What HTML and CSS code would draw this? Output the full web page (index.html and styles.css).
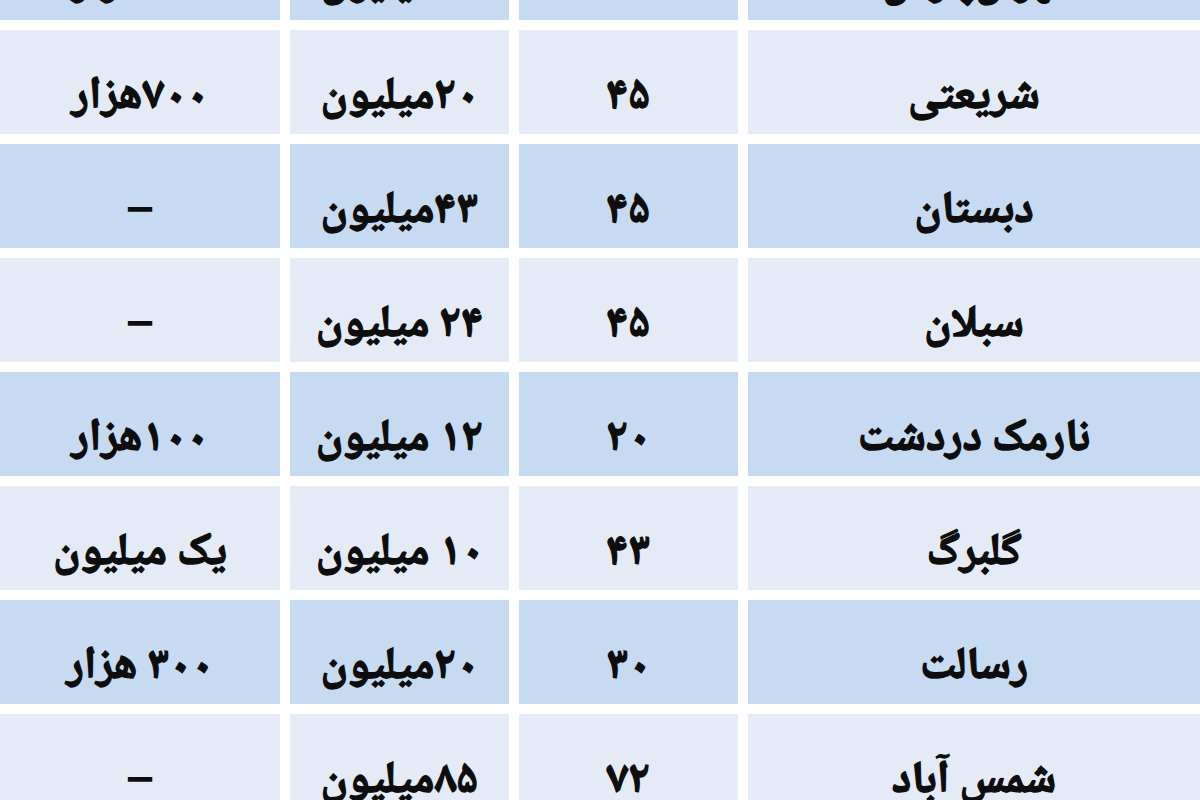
FILE: index.html
```html
<!DOCTYPE html>
<html lang="fa" dir="rtl">
<head>
<meta charset="utf-8">
<title>جدول</title>
<link rel="stylesheet" href="styles.css">
</head>
<body>
<div class="table">
  <div class="cell dark">تهران‌پارس</div>
  <div class="cell dark">۲۵</div>
  <div class="cell dark">۳۰میلیون</div>
  <div class="cell dark">۲۰۰هزار</div>

  <div class="cell light">شریعتی</div>
  <div class="cell light">۴۵</div>
  <div class="cell light">۲۰میلیون</div>
  <div class="cell light">۷۰۰هزار</div>

  <div class="cell dark">دبستان</div>
  <div class="cell dark">۴۵</div>
  <div class="cell dark">۴۳میلیون</div>
  <div class="cell dark">–</div>

  <div class="cell light">سبلان</div>
  <div class="cell light">۴۵</div>
  <div class="cell light">۲۴ میلیون</div>
  <div class="cell light">–</div>

  <div class="cell dark">نارمک دردشت</div>
  <div class="cell dark">۲۰</div>
  <div class="cell dark">۱۲ میلیون</div>
  <div class="cell dark">۱۰۰هزار</div>

  <div class="cell light">گلبرگ</div>
  <div class="cell light">۴۳</div>
  <div class="cell light">۱۰ میلیون</div>
  <div class="cell light">یک میلیون</div>

  <div class="cell dark">رسالت</div>
  <div class="cell dark">۳۰</div>
  <div class="cell dark">۲۰میلیون</div>
  <div class="cell dark">۳۰۰ هزار</div>

  <div class="cell light">شمس آباد</div>
  <div class="cell light">۷۲</div>
  <div class="cell light">۸۵میلیون</div>
  <div class="cell light">–</div>
</div>
</body>
</html>
```
FILE: styles.css
```css
html, body {
  margin: 0;
  padding: 0;
  background: #ffffff;
  overflow: hidden;
}

body {
  width: 1200px;
  height: 800px;
  font-family: "Noto Naskh Arabic", "Liberation Serif", serif;
}

.table {
  margin-top: -84px;
  display: grid;
  grid-template-columns: 1fr 219px 219px 280px;
  grid-auto-rows: 104px;
  column-gap: 10px;
  row-gap: 10px;
}

.cell {
  display: flex;
  align-items: center;
  justify-content: center;
  padding-top: 32px;
  box-sizing: border-box;
  font-size: 45px;
  font-weight: bold;
  color: #0d0d0d;
  -webkit-text-stroke: 1.4px #0d0d0d;
  white-space: nowrap;
}

.light {
  background: #e4ebf7;
}

.dark {
  background: #c6dbf1;
}
```
